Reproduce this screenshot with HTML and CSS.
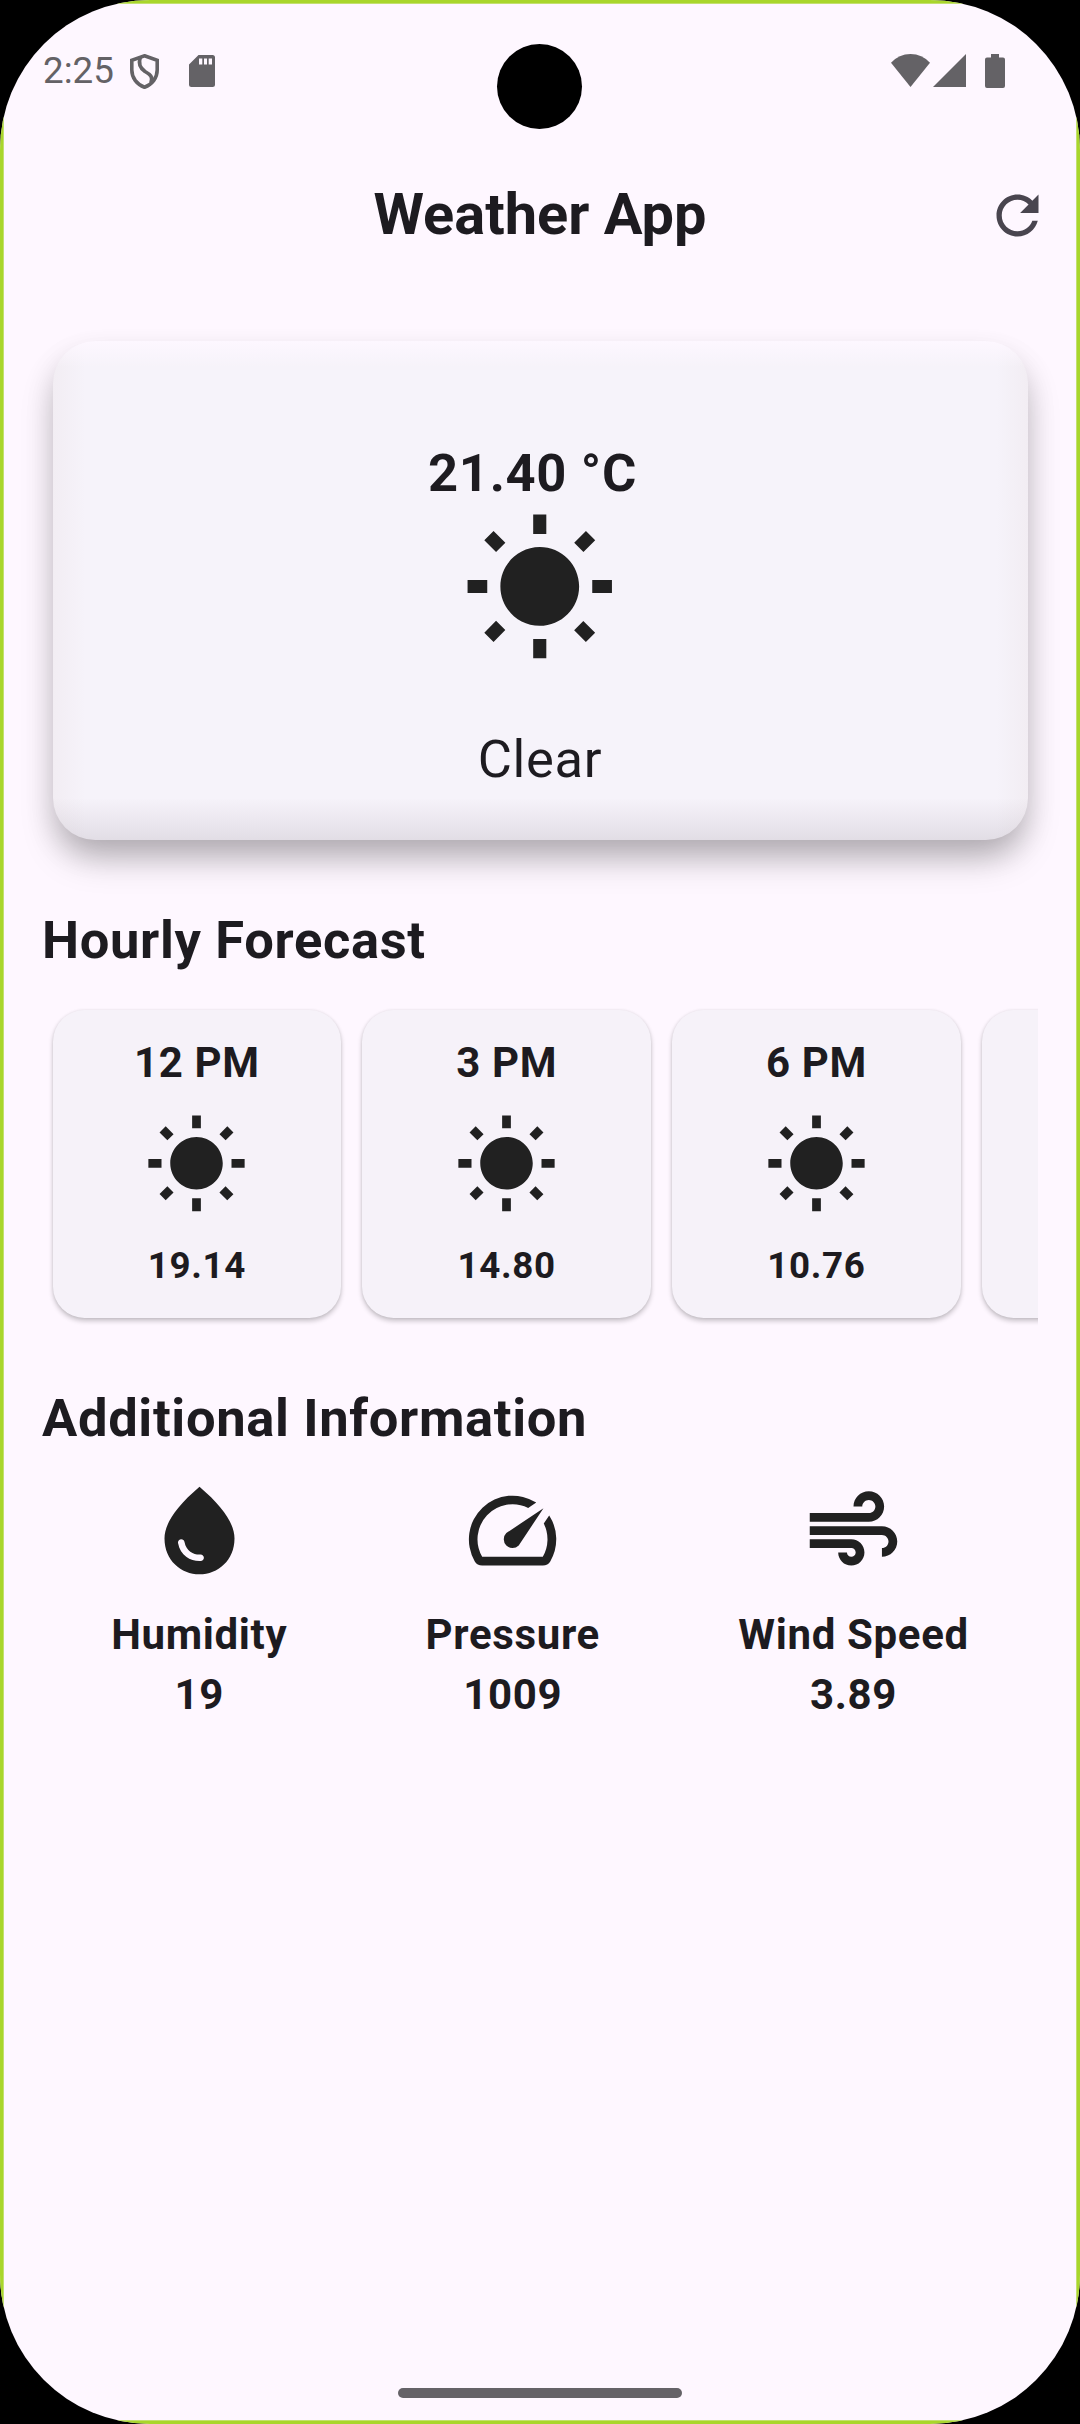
FILE: index.html
```html
<!DOCTYPE html>
<html lang="en">
<head>
<meta charset="utf-8">
<title>Weather App</title>
<link rel="stylesheet" href="styles.css">
</head>
<body>
<svg width="0" height="0" class="defs">
  <symbol id="sun" viewBox="0 0 24 24"><path d="M6.76 4.84l-1.8-1.79-1.41 1.41 1.79 1.79 1.42-1.41zM4 10.5H1v2h3v-2zm9-9.95h-2V3.5h2V.55zm7.45 3.91l-1.41-1.41-1.79 1.79 1.41 1.41 1.79-1.79zm-3.21 13.7l1.79 1.8 1.41-1.41-1.8-1.79-1.4 1.4zM20 10.5v2h3v-2h-3zm-8-5c-3.31 0-6 2.69-6 6s2.69 6 6 6 6-2.69 6-6-2.69-6-6-6zm-1 16.95h2V19.5h-2v2.95zm-7.45-3.91l1.41 1.41 1.79-1.8-1.41-1.41-1.79 1.8z"/></symbol>
</svg>
<div class="device">
  <div class="camera"></div>
  <div class="screen">
    <header class="status">
      <div class="status-left">
        <span class="time">2:25</span>
        <svg class="shield" viewBox="0 0 29 35" fill="none" stroke="currentColor" stroke-width="3.6"><path d="M14.5 1.8L27.2 6.2V16C27.2 24 22 30.5 14.5 33.2C7 30.5 1.8 24 1.8 16V6.2Z"/><path d="M10.3 3.5C8 10 10 14 15 17.5C20.5 20.5 23 23 21 28.5"/></svg>
        <svg class="sd" viewBox="0 0 26 32"><path fill-rule="evenodd" d="M9.5 0H23.5Q26 0 26 2.5V29.5Q26 32 23.5 32H2.5Q0 32 0 29.5V9.5ZM10 3.5V9.5H13.3V3.5ZM15 3.5V9.5H18V3.5ZM19.7 3.5V9.5H23V3.5Z"/></svg>
      </div>
      <div class="status-right">
        <svg class="wifi" viewBox="0 0 39 33"><path d="M19.5 33L0 8.8Q8 0 19.5 0T39 8.8Z"/></svg>
        <svg class="signal" viewBox="0 0 33 33"><path d="M33 0V33H0Z"/></svg>
        <svg class="battery" viewBox="0 0 20 34"><path d="M6 0H14V3.5H18Q20 3.5 20 5.5V32Q20 34 18 34H2Q0 34 0 32V5.5Q0 3.5 2 3.5H6Z"/></svg>
      </div>
    </header>
    <div class="appbar">
      <h1>Weather App</h1>
      <svg class="refresh" viewBox="0 0 24 24"><path d="M17.65 6.35C16.2 4.9 14.21 4 12 4c-4.42 0-7.99 3.58-7.99 8s3.57 8 7.99 8c3.73 0 6.84-2.55 7.73-6h-2.08c-.82 2.33-3.04 4-5.65 4-3.31 0-6-2.69-6-6s2.69-6 6-6c1.66 0 3.14.69 4.22 1.78L13 11h7V4l-2.35 2.35z"/></svg>
    </div>
    <main>
      <section class="current">
        <div class="temp">21.40 °C</div>
        <svg class="sun-large"><use href="#sun"/></svg>
        <div class="condition">Clear</div>
      </section>
      <h2>Hourly Forecast</h2>
      <div class="hours">
        <article class="hour"><b>12 PM</b><svg><use href="#sun"/></svg><span>19.14</span></article>
        <article class="hour"><b>3 PM</b><svg><use href="#sun"/></svg><span>14.80</span></article>
        <article class="hour"><b>6 PM</b><svg><use href="#sun"/></svg><span>10.76</span></article>
        <article class="hour"></article>
      </div>
      <h2>Additional Information</h2>
      <div class="info">
        <div class="item">
          <svg viewBox="0 0 24 24"><path d="M12,2c-5.33,4.55-8,8.48-8,11.8c0,4.98,3.8,8.2,8,8.2s8-3.22,8-8.2C20,10.48,17.33,6.55,12,2z M7.83,14c0.37,0,0.67,0.26,0.74,0.62c0.41,2.22,2.28,2.98,3.64,2.87c0.43-0.02,0.79,0.32,0.79,0.75c0,0.4-0.32,0.73-0.72,0.75c-2.13,0.13-4.62-1.09-5.19-4.12C7.01,14.42,7.37,14,7.83,14z"/></svg>
          <span>Humidity</span><span>19</span>
        </div>
        <div class="item">
          <svg viewBox="0 0 24 24"><path d="M20.38 8.57l-1.23 1.85a8 8 0 0 1-.22 7.58H5.07A8 8 0 0 1 15.58 6.85l1.85-1.23A10 10 0 0 0 3.35 19a2 2 0 0 0 1.72 1h13.85a2 2 0 0 0 1.74-1 10 10 0 0 0-.27-10.44zM10.59 15.41a2 2 0 0 0 2.83 0l5.66-8.49-8.49 5.66a2 2 0 0 0 0 2.83z"/></svg>
          <span>Pressure</span><span>1009</span>
        </div>
        <div class="item">
          <svg viewBox="0 0 24 24"><path d="M14.5 17c0 1.65-1.35 3-3 3s-3-1.35-3-3h2c0 .55.45 1 1 1s1-.45 1-1-.45-1-1-1H2v-2h9.5c1.65 0 3 1.35 3 3zM19 6.5C19 4.57 17.43 3 15.5 3S12 4.57 12 6.5h2c0-.83.67-1.5 1.5-1.5s1.5.67 1.5 1.5S16.33 8 15.5 8H2v2h13.5c1.93 0 3.5-1.57 3.5-3.5zm-.5 4.5H2v2h16.5c.83 0 1.5.67 1.5 1.5s-.67 1.5-1.5 1.5v2c1.93 0 3.5-1.57 3.5-3.5S20.43 11 18.5 11z"/></svg>
          <span>Wind Speed</span><span>3.89</span>
        </div>
      </div>
    </main>
    <footer class="nav"><div class="pill"></div></footer>
  </div>
</div>
</body>
</html>
```
FILE: styles.css
```css
* { box-sizing: border-box; }

body {
  margin: 0;
  background: #000;
  color: #1d1b20;
  font-family: Roboto, "Liberation Sans", sans-serif;
  letter-spacing: 0.656px;
}

svg { display: block; flex: none; fill: currentColor; }
.defs { position: absolute; }

.device {
  position: relative;
  width: 1080px;
  height: 2424px;
  border-radius: 150px;
  overflow: hidden;
}

.camera {
  position: absolute;
  left: 497px;
  top: 44px;
  width: 85px;
  height: 85px;
  border-radius: 50%;
  background: #000;
}

.screen {
  display: flex;
  flex-direction: column;
  height: 100%;
  padding: 0 38px;
  border: 3px solid #a9d62c;
  background: #fef7ff;
  box-shadow: inset 0 0 0 1px #c3e070;
}

.status {
  display: flex;
  justify-content: space-between;
  height: 138.75px;
  padding: 51px 34px 0 2px;
  color: #646266;
}
.status-left, .status-right { display: flex; align-items: flex-start; }
.time { font-size: 36.75px; line-height: 34px; letter-spacing: 0; }
.shield { width: 29px; height: 35px; margin-left: 16px; fill: none; }
.sd { width: 26px; height: 32px; margin: 1px 0 0 30px; }
.wifi { width: 39px; height: 33px; }
.signal { width: 33px; height: 33px; margin-left: 3px; }
.battery { width: 20px; height: 34px; margin-left: 19px; }

.appbar {
  display: grid;
  grid-template-columns: 1fr auto 1fr;
  align-items: center;
  height: 147px;
  padding: 0 1px;
}
h1 {
  grid-column: 2;
  margin: 0;
  padding-bottom: 2px;
  font-size: 57.75px;
  line-height: 74px;
  font-weight: 700;
  letter-spacing: 0;
}
.refresh {
  justify-self: end;
  width: 63px;
  height: 63px;
  margin-right: -10.5px;
  color: #49454f;
}

main { padding: 52.5px 1px 0; }

.current {
  display: flex;
  flex-direction: column;
  align-items: center;
  height: 499px;
  margin: 0 10.5px;
  padding-top: 95px;
  border-radius: 42px;
  background:
    linear-gradient(to bottom, #fdf7ff, #fdf7ff00 26px),
    linear-gradient(to top, #3c2d3c1c, #3c2d3c12 14px, #3c2d3c00 42px),
    linear-gradient(to right, #f2edf3, #f2edf300 32px),
    linear-gradient(to left, #f2edf3, #f2edf300 32px),
    #f6f3fa;
  box-shadow: 0 22px 36px -6px #00000040, 0 14px 30px #0000001c;
  font-size: 52.5px;
  line-height: 75px;
}
.temp { padding-right: 15px; font-weight: 700; }
.sun-large {
  width: 157.5px;
  height: 157.5px;
  margin: 0 1px 53px 0;
  color: #212121;
}

h2 {
  margin: 62.5px 0 21px;
  font-size: 52.5px;
  line-height: 75px;
  font-weight: 700;
}

.hours {
  display: flex;
  gap: 21px;
  margin: -10px 0 -21px;
  padding: 21px 10.5px;
  overflow: hidden;
}
.hour {
  display: flex;
  flex: none;
  flex-direction: column;
  align-items: center;
  width: 288.75px;
  height: 308.5px;
  padding-top: 25.25px;
  border-radius: 31.5px;
  background: #f6f2f9;
  box-shadow: 0 3px 5px #00000038, 0 0 3px #00000014;
  font-weight: 700;
}
.hour b { font-size: 42px; line-height: 55px; font-weight: 700; }
.hour svg { width: 105px; height: 105px; margin: 22.5px 0 21.5px; color: #212121; }
.hour span { font-size: 36.75px; line-height: 53px; }

.info { display: flex; justify-content: space-around; }
.item {
  display: flex;
  flex-direction: column;
  align-items: center;
  font-size: 42px;
  line-height: 60.2px;
  font-weight: 700;
}
.item svg { width: 105px; height: 105px; margin: 1px 0 22px; color: #212121; }

.nav {
  display: flex;
  justify-content: center;
  margin-top: auto;
  padding-bottom: 23px;
}
.pill {
  width: 284px;
  height: 10.5px;
  border-radius: 6px;
  background: #656267;
}
```
